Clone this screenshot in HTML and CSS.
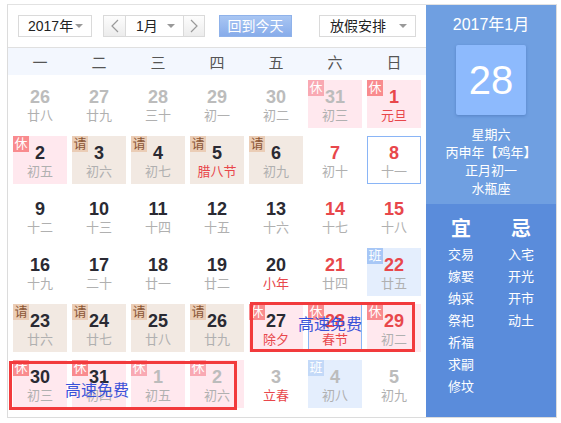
FILE: index.html
```html
<!DOCTYPE html>
<html lang="zh-CN">
<head>
<meta charset="utf-8">
<title>万年历</title>
<link rel="stylesheet" href="styles.css">
</head>
<body>
<div class="page">
  <div class="cal">
    <div class="main">
      <div class="toolbar">
        <div class="select year"><span>2017年</span><i class="caret"></i></div>
        <div class="month-group">
          <div class="nav"><svg width="8" height="14" viewBox="0 0 8 14"><polyline points="7,1 1,7 7,13" fill="none" stroke="#999" stroke-width="1.2"/></svg></div>
          <div class="select month"><span>1月</span><i class="caret"></i></div>
          <div class="nav"><svg width="8" height="14" viewBox="0 0 8 14"><polyline points="1,1 7,7 1,13" fill="none" stroke="#999" stroke-width="1.2"/></svg></div>
        </div>
        <div class="today-btn">回到今天</div>
        <div class="select holiday"><span>放假安排</span><i class="caret"></i></div>
      </div>
      <div class="week">
        <span>一</span><span>二</span><span>三</span><span>四</span><span>五</span><span>六</span><span>日</span>
      </div>
      <div class="grid">
        <div class="cell other"><b>26</b><em>廿八</em></div>
        <div class="cell other"><b>27</b><em>廿九</em></div>
        <div class="cell other"><b>28</b><em>三十</em></div>
        <div class="cell other"><b>29</b><em>初一</em></div>
        <div class="cell other"><b>30</b><em>初二</em></div>
        <div class="cell other rest"><i class="tag tag-rest-light">休</i><b>31</b><em>初三</em></div>
        <div class="cell rest red"><i class="tag tag-rest">休</i><b>1</b><em class="fest">元旦</em></div>

        <div class="cell rest"><i class="tag tag-rest">休</i><b>2</b><em>初五</em></div>
        <div class="cell leave"><i class="tag tag-leave">请</i><b>3</b><em>初六</em></div>
        <div class="cell leave"><i class="tag tag-leave">请</i><b>4</b><em>初七</em></div>
        <div class="cell leave"><i class="tag tag-leave">请</i><b>5</b><em class="fest">腊八节</em></div>
        <div class="cell leave"><i class="tag tag-leave">请</i><b>6</b><em>初九</em></div>
        <div class="cell red"><b>7</b><em>初十</em></div>
        <div class="cell red outlined"><b>8</b><em>十一</em></div>

        <div class="cell"><b>9</b><em>十二</em></div>
        <div class="cell"><b>10</b><em>十三</em></div>
        <div class="cell"><b>11</b><em>十四</em></div>
        <div class="cell"><b>12</b><em>十五</em></div>
        <div class="cell"><b>13</b><em>十六</em></div>
        <div class="cell red"><b>14</b><em>十七</em></div>
        <div class="cell red"><b>15</b><em>十八</em></div>

        <div class="cell"><b>16</b><em>十九</em></div>
        <div class="cell"><b>17</b><em>二十</em></div>
        <div class="cell"><b>18</b><em>廿一</em></div>
        <div class="cell"><b>19</b><em>廿二</em></div>
        <div class="cell"><b>20</b><em class="fest">小年</em></div>
        <div class="cell red"><b>21</b><em>廿四</em></div>
        <div class="cell red work"><i class="tag tag-work">班</i><b>22</b><em>廿五</em></div>

        <div class="cell leave"><i class="tag tag-leave">请</i><b>23</b><em>廿六</em></div>
        <div class="cell leave"><i class="tag tag-leave">请</i><b>24</b><em>廿七</em></div>
        <div class="cell leave"><i class="tag tag-leave">请</i><b>25</b><em>廿八</em></div>
        <div class="cell leave"><i class="tag tag-leave">请</i><b>26</b><em>廿九</em></div>
        <div class="cell rest"><i class="tag tag-rest">休</i><b>27</b><em class="fest">除夕</em></div>
        <div class="cell rest red outlined"><i class="tag tag-rest">休</i><b>28</b><em class="fest">春节</em></div>
        <div class="cell rest red"><i class="tag tag-rest">休</i><b>29</b><em>初二</em></div>

        <div class="cell rest"><i class="tag tag-rest">休</i><b>30</b><em>初三</em></div>
        <div class="cell rest"><i class="tag tag-rest">休</i><b>31</b><em>初四</em></div>
        <div class="cell rest other"><i class="tag tag-rest-light">休</i><b>1</b><em>初五</em></div>
        <div class="cell rest other"><i class="tag tag-rest-light">休</i><b>2</b><em>初六</em></div>
        <div class="cell other"><b>3</b><em class="fest">立春</em></div>
        <div class="cell other work"><i class="tag tag-work-light">班</i><b>4</b><em>初八</em></div>
        <div class="cell other"><b>5</b><em>初九</em></div>
      </div>
    </div>
    <div class="panel">
      <div class="panel-top">
        <div class="ym">2017年1月</div>
        <div class="bigday">28</div>
        <div class="info">
          <p>星期六</p>
          <p>丙申年【鸡年】</p>
          <p>正月初一</p>
          <p>水瓶座</p>
        </div>
      </div>
      <div class="panel-bottom">
        <div class="col">
          <h3>宜</h3>
          <p>交易</p><p>嫁娶</p><p>纳采</p><p>祭祀</p><p>祈福</p><p>求嗣</p><p>修坟</p>
        </div>
        <div class="col">
          <h3>忌</h3>
          <p>入宅</p><p>开光</p><p>开市</p><p>动土</p>
        </div>
      </div>
    </div>
  </div>
  <div class="mark mark-1"></div>
  <div class="note note-1">高速免费</div>
  <div class="mark mark-2"></div>
  <div class="note note-2">高速免费</div>
</div>
</body>
</html>
```
FILE: styles.css
```css
* { box-sizing: border-box; }
html, body { margin: 0; padding: 0; background: #fff; }
body {
  font-family: "Liberation Sans", "Noto Sans CJK SC", sans-serif;
  color: #333;
}
.page { position: relative; width: 561px; height: 423px; padding: 4px 0 0 7px; }
.cal {
  display: flex;
  width: 550px;
  height: 414px;
  border: 1px solid #dcdcdc;
  border-top-color: #e2e2e2;
}
.main { width: 418px; display: flex; flex-direction: column; }

/* toolbar */
.toolbar {
  height: 43px;
  border-bottom: 1px solid #e0e0e0;
  display: flex;
  align-items: flex-start;
  padding: 10px 0 0 10px;
}
.select {
  height: 22px;
  border: 1px solid #dadada;
  background: #fff;
  display: flex;
  align-items: center;
  justify-content: space-between;
  font-size: 14px;
  color: #222;
  padding: 0 8px 0 9px;
}
.select span { line-height: 20px; }
.caret {
  width: 0; height: 0;
  border-left: 4px solid transparent;
  border-right: 4px solid transparent;
  border-top: 4px solid #999;
}
.year { width: 74px; }
.month-group { display: flex; margin-left: 11px; }
.nav {
  width: 23px; height: 22px;
  border: 1px solid #dadada;
  background: linear-gradient(#fdfdfd, #ececec);
  display: flex; align-items: center; justify-content: center;
}
.month { width: 57px; border-left: 0; border-right: 0; padding-left: 10px; }
.month-group .nav:last-child { width: 22px; }
.today-btn {
  margin-left: 14px;
  width: 73px; height: 22px;
  border: 1px solid #8fb2ea;
  background: linear-gradient(#a9c6f3, #87acea);
  color: #fff;
  font-size: 14px;
  line-height: 20px;
  text-align: center;
}
.holiday { width: 97px; margin-left: 27px; padding-left: 10px; }

/* week header */
.week {
  height: 27px;
  background: #f3f7fe;
  display: grid;
  grid-template-columns: repeat(7, 54px);
  column-gap: 5px;
  padding-left: 5px;
  align-items: center;
}
.week span { text-align: center; font-size: 15px; color: #555; }

/* grid */
.grid {
  display: grid;
  grid-template-columns: repeat(7, 54px);
  grid-auto-rows: 48px;
  column-gap: 5px;
  row-gap: 8px;
  padding: 5px 0 0 5px;
}
.cell {
  position: relative;
  display: flex;
  flex-direction: column;
  align-items: center;
  padding-top: 6px;
}
.cell b {
  font-size: 18px;
  font-weight: bold;
  line-height: 22px;
  color: #2a2a33;
}
.cell em {
  font-style: normal;
  font-size: 13px;
  line-height: 16px;
  color: #b0b0b0;
}
.cell.red b { color: #e8474b; }
.cell.other b { color: #bcbcbc; }
.cell em.fest { color: #e8474b; }
.rest { background: #ffe8ee; }
.leave { background: #f2e9e2; }
.work { background: #e4eefd; }
.outlined { border: 1px solid #8ab5f6; padding-top: 5px; }
.outlined .tag { left: -1px; top: -1px; }

.tag {
  position: absolute;
  left: 0; top: 0;
  width: 16px; height: 16px;
  font-style: normal;
  font-size: 13px;
  line-height: 16px;
  text-align: center;
  color: #fff;
}
.tag-rest { background: #f98b8e; }
.tag-rest-light { background: #f9a9b3; }
.tag-leave { background: #ebcdb6; color: #8a5535; }
.tag-work { background: #a7c7f6; }
.tag-work-light { background: #c3d9f8; }

/* right panel */
.panel { width: 130px; display: flex; flex-direction: column; color: #fff; }
.panel-top {
  height: 199px;
  background: #6f9fe1;
  display: flex;
  flex-direction: column;
  align-items: center;
  padding-top: 10px;
}
.ym { font-size: 16px; line-height: 20px; }
.bigday {
  margin-top: 10px;
  width: 70px; height: 70px;
  background: #8dbafd;
  border-radius: 2px;
  box-shadow: 0 1px 3px rgba(40, 80, 150, 0.35);
  font-size: 40px;
  line-height: 70px;
  text-align: center;
}
.info { margin-top: 11px; text-align: center; }
.info p { margin: 0; font-size: 13px; line-height: 18px; }
.panel-bottom {
  flex: 1;
  background: #5a8cdb;
  display: grid;
  grid-template-columns: 60px 60px;
  padding: 14px 5px 0;
  align-content: start;
}
.col { text-align: center; }
.col h3 { margin: 0 0 4px; font-size: 20px; line-height: 22px; font-weight: bold; }
.col p { margin: 0; font-size: 13px; line-height: 22px; }

/* annotations */
.mark { position: absolute; border: 3px solid #f23a3c; }
.mark-1 { left: 250px; top: 302px; width: 165px; height: 50px; }
.mark-2 { left: 9px; top: 361px; width: 228px; height: 49px; }
.note {
  position: absolute;
  color: #3a52d8;
  font-size: 16px;
  line-height: 18px;
  font-family: "Noto Sans CJK SC", sans-serif;
}
.note-1 { left: 298px; top: 314px; }
.note-2 { left: 65px; top: 380px; }
```
